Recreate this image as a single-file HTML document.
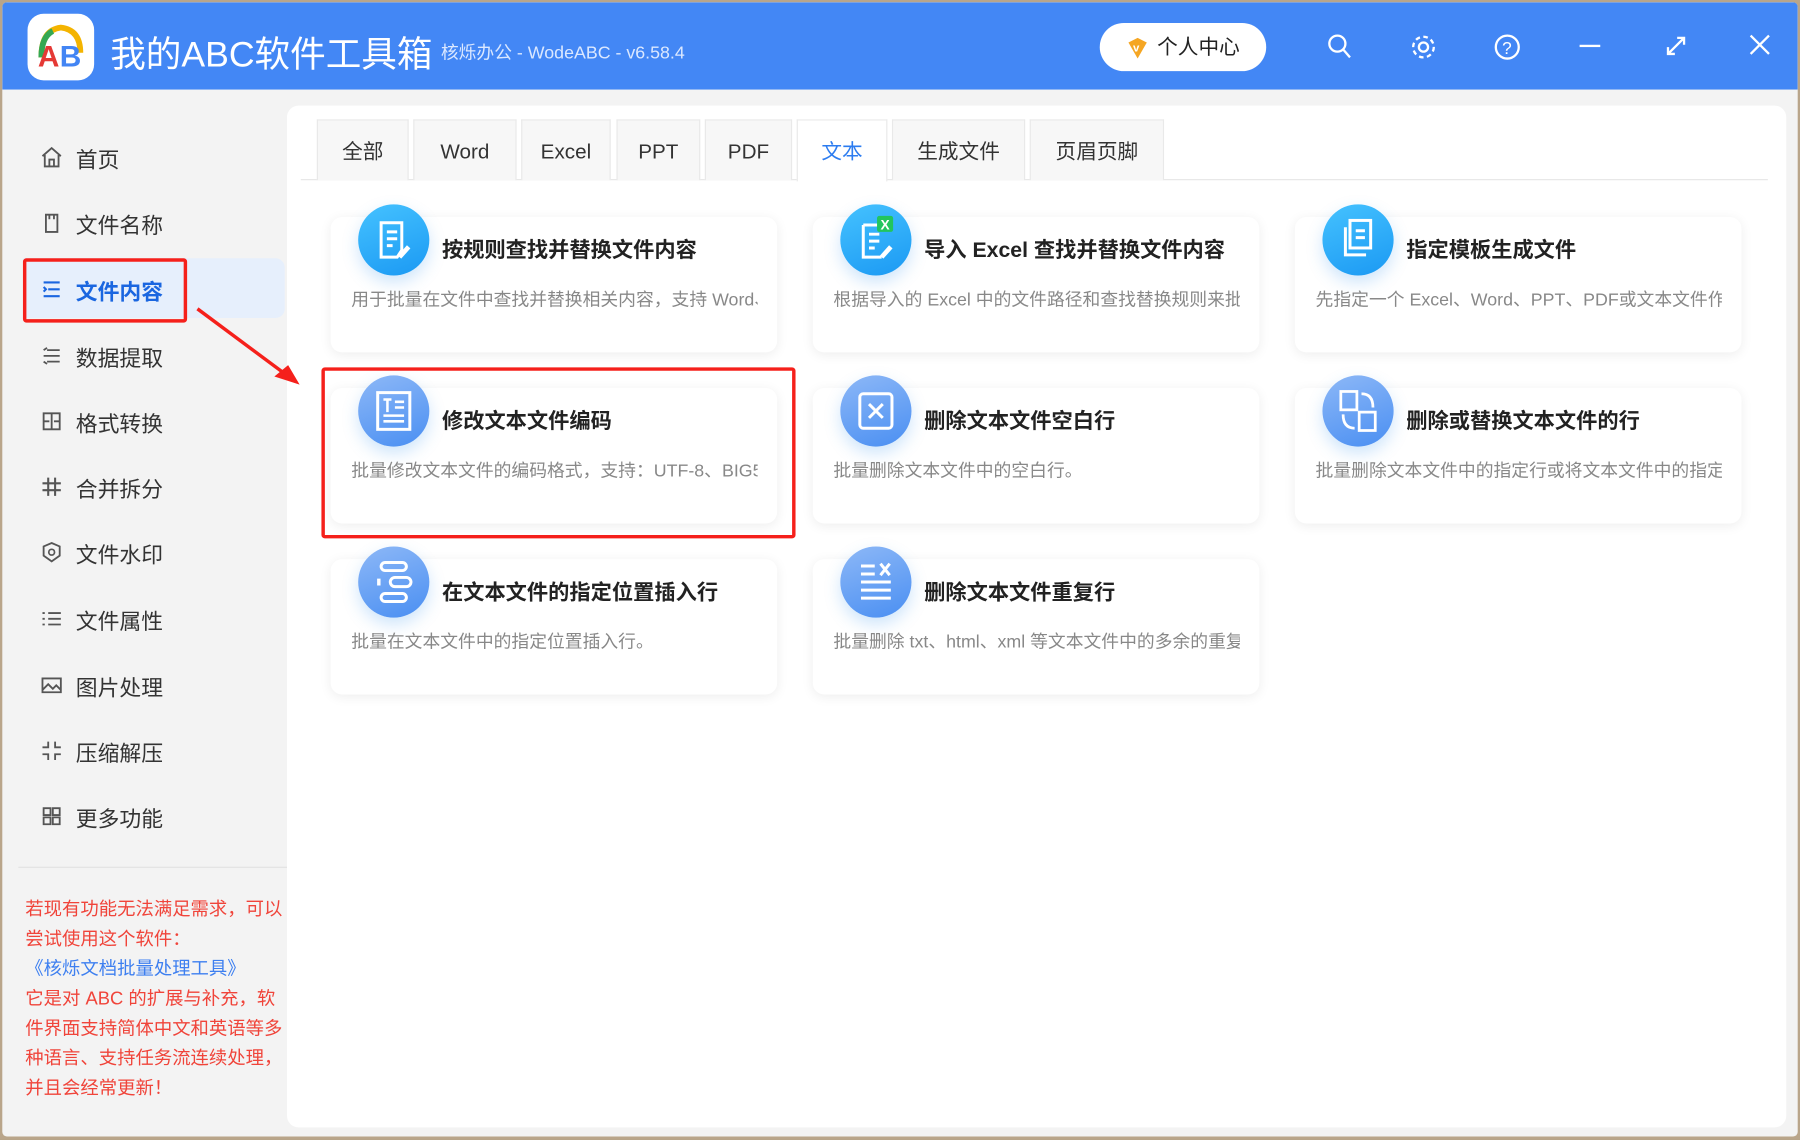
<!DOCTYPE html>
<html><head><meta charset="utf-8"><style>
*{margin:0;padding:0;box-sizing:border-box}
html,body{width:1800px;height:1140px;overflow:hidden;background:#8a7a60}
#s{position:absolute;left:0;top:0;width:1568px;height:993px;transform:scale(1.14796,1.148);transform-origin:0 0;font-family:"Liberation Sans","Noto Sans CJK SC",sans-serif;background:#b9a58a}
.win{position:absolute;left:2px;top:2px;width:1564px;height:988px;background:#f3f3f3;overflow:hidden;border-radius:4px}
.tb{position:absolute;left:0;top:0;width:100%;height:76px;background:#4387f5}
.logo{position:absolute;left:22px;top:10px;width:58px;height:58px;background:#fff;border-radius:14px}
.title{position:absolute;left:94px;top:20px;color:#fff;font-size:31px;white-space:nowrap}
.sub{position:absolute;left:382px;top:32px;color:#dbe8ff;font-size:15.5px;white-space:nowrap}
.vip{position:absolute;left:956px;top:18px;width:145px;height:42px;background:#fff;border-radius:21px;font-size:18px;color:#222;line-height:42px;padding-left:50px}
.ic{position:absolute;top:26px}
.nav{position:absolute;left:64px;font-size:19px;color:#333;white-space:nowrap}
.ni{position:absolute;left:33px;width:20px;height:20px}
.main{position:absolute;left:248px;top:90px;width:1306px;height:890px;background:#fff;border-radius:10px}
.tab{position:absolute;top:102px;height:53px;background:#f7f7f7;border:1px solid #e9e9e9;border-bottom:none;font-size:18px;color:#333;text-align:center;line-height:54px}
.card{position:absolute;width:389px;height:118px;background:#fff;border-radius:10px;box-shadow:0 2px 10px rgba(0,0,0,.07)}
.cic{position:absolute;width:62px;height:62px;border-radius:50%;box-shadow:0 6px 14px rgba(60,150,240,.25)}
.a{background:linear-gradient(160deg,#45c2ff,#1b99f3)}
.b{background:linear-gradient(160deg,#8db8f7,#4a8ff2)}
.ct{position:absolute;font-size:18.5px;font-weight:bold;color:#222;white-space:nowrap}
.cd{position:absolute;font-size:15.5px;color:#888;white-space:nowrap;overflow:hidden;width:354px}
.red{color:#f0443a;font-size:16px;position:absolute;left:20px;line-height:26px;width:228px}
</style></head><body><div id="s">
<div class="win">
<div class="tb">
<div class="logo"><svg width="58" height="58" viewBox="0 0 58 58"><path d="M12 38 Q12 14 29 12 Q46 14 46 34" fill="none" stroke="#f4b400" stroke-width="5"/><path d="M12 38 Q12 20 22 15" fill="none" stroke="#34a853" stroke-width="5"/><text x="9" y="46" font-size="26" font-weight="bold" fill="#e53935" font-family="Liberation Sans">A</text><text x="28" y="46" font-size="26" font-weight="bold" fill="#4285f4" font-family="Liberation Sans">B</text></svg></div>
<div class="title">我的ABC软件工具箱</div>
<div class="sub">核烁办公 - WodeABC - v6.58.4</div>
<div class="vip"><svg style="position:absolute;left:22px;top:11px" width="22" height="22" viewBox="0 0 22 22"><path d="M3 6 L11 2 L19 6 L11 20 Z" fill="#f5a623"/><text x="7" y="14" font-size="10" fill="#fff" font-weight="bold">v</text></svg>个人中心</div>
<svg class="ic" style="left:1153px" width="24" height="26" viewBox="0 0 24 26"><circle cx="10" cy="10" r="7" fill="none" stroke="#fff" stroke-width="2"/><path d="M15 15 L21 22" stroke="#fff" stroke-width="2"/></svg>
<svg class="ic" style="left:1225px" width="26" height="26" viewBox="0 0 26 26"><circle cx="13" cy="13" r="4" fill="none" stroke="#fff" stroke-width="2"/><circle cx="13" cy="13" r="9" fill="none" stroke="#fff" stroke-width="2" stroke-dasharray="4 3"/></svg>
<svg class="ic" style="left:1298px" width="26" height="26" viewBox="0 0 26 26"><circle cx="13" cy="13" r="10" fill="none" stroke="#fff" stroke-width="2"/><text x="8.5" y="19" font-size="15" fill="#fff" font-family="Liberation Sans">?</text></svg>
<div style="position:absolute;left:1374px;top:37px;width:18px;height:2px;background:#fff"></div>
<svg class="ic" style="left:1446px" width="24" height="24" viewBox="0 0 24 24"><path d="M5 19 L19 5 M13 5 L19 5 L19 11 M5 13 L5 19 L11 19" fill="none" stroke="#fff" stroke-width="2"/></svg>
<svg class="ic" style="left:1520px" width="22" height="22" viewBox="0 0 22 22"><path d="M3 3 L19 19 M19 3 L3 19" stroke="#fff" stroke-width="2"/></svg>
</div>

<div style="position:absolute;left:18px;top:223px;width:228px;height:52px;background:#e6effc;border-radius:0 8px 8px 0"></div>
<div style="position:absolute;left:18px;top:223px;width:143px;height:56px;border:3px solid #f5201b;border-radius:3px"></div>
<div class="nav" style="top:123px">首页</div>
<div class="nav" style="top:180px">文件名称</div>
<div class="nav" style="top:238px;color:#1a66e0;font-weight:bold">文件内容</div>
<div class="nav" style="top:296px">数据提取</div>
<div class="nav" style="top:353px">格式转换</div>
<div class="nav" style="top:410px">合并拆分</div>
<div class="nav" style="top:467px">文件水印</div>
<div class="nav" style="top:525px">文件属性</div>
<div class="nav" style="top:583px">图片处理</div>
<div class="nav" style="top:640px">压缩解压</div>
<div class="nav" style="top:697px">更多功能</div>
<svg class="ni" style="top:125px" viewBox="0 0 20 20"><path d="M2 9 L10 2 L18 9 M4 8 V18 H16 V8 M8 18 V12 H12 V18" fill="none" stroke="#555" stroke-width="1.6"/></svg>
<svg class="ni" style="top:182px" viewBox="0 0 20 20"><path d="M5 3 H15 V18 H5 Z M8 3 V7 M12 3 V7" fill="none" stroke="#555" stroke-width="1.6"/></svg>
<svg class="ni" style="top:240px" viewBox="0 0 20 20"><path d="M3 4 H17 M7 10 H17 M3 16 H17 M3 8 L5 10 L3 12" fill="none" stroke="#1a66e0" stroke-width="1.8"/></svg>
<svg class="ni" style="top:298px" viewBox="0 0 20 20"><path d="M6 5 H17 M3 10 H17 M6 15 H17 M3 5 L6 3 M3 15 L6 17" fill="none" stroke="#555" stroke-width="1.6"/></svg>
<svg class="ni" style="top:355px" viewBox="0 0 20 20"><path d="M3 3 H17 V17 H3 Z M10 3 V17 M3 10 H8 M12 10 H17" fill="none" stroke="#555" stroke-width="1.6"/></svg>
<svg class="ni" style="top:412px" viewBox="0 0 20 20"><path d="M7 2 V18 M13 2 V18 M2 7 H18 M2 13 H18" fill="none" stroke="#555" stroke-width="1.8"/></svg>
<svg class="ni" style="top:469px" viewBox="0 0 20 20"><path d="M10 2 L17 5 V13 L10 18 L3 13 V5 Z" fill="none" stroke="#555" stroke-width="1.6"/><circle cx="10" cy="10" r="2.5" fill="none" stroke="#555" stroke-width="1.5"/></svg>
<svg class="ni" style="top:527px" viewBox="0 0 20 20"><path d="M2 5 H4 M7 5 H18 M2 10 H4 M7 10 H18 M2 15 H4 M7 15 H18" stroke="#555" stroke-width="1.6"/></svg>
<svg class="ni" style="top:585px" viewBox="0 0 20 20"><path d="M2 4 H18 V16 H2 Z M2 14 L7 9 L11 13 L14 10 L18 14" fill="none" stroke="#555" stroke-width="1.6"/></svg>
<svg class="ni" style="top:642px" viewBox="0 0 20 20"><path d="M2 7 H7 V2 M13 2 V7 H18 M2 13 H7 V18 M13 18 V13 H18" fill="none" stroke="#555" stroke-width="1.6"/></svg>
<svg class="ni" style="top:699px" viewBox="0 0 20 20"><path d="M3 3 H9 V9 H3 Z M11 3 H17 V9 H11 Z M3 11 H9 V17 H3 Z M11 11 H17 V17 H11 Z" fill="none" stroke="#555" stroke-width="1.6"/></svg>
<div style="position:absolute;left:14px;top:753px;width:234px;height:1px;background:#e2e2e2"></div>
<div class="red" style="top:778px">若现有功能无法满足需求，可以尝试使用这个软件：<br><span style="color:#3d7ff0">《核烁文档批量处理工具》</span><br>它是对 ABC 的扩展与补充，软件界面支持简体中文和英语等多种语言、支持任务流连续处理，并且会经常更新！</div>

<div class="main"></div>
<div style="position:absolute;left:260px;top:154px;width:1278px;height:1px;background:#e6e6e6"></div>
<div class="tab" style="left:274px;width:80px">全部</div>
<div class="tab" style="left:358px;width:90px">Word</div>
<div class="tab" style="left:452px;width:78px">Excel</div>
<div class="tab" style="left:535px;width:73px">PPT</div>
<div class="tab" style="left:612px;width:76px">PDF</div>
<div class="tab" style="left:692px;width:79px;background:#fff;color:#2c7cf0;height:54px">文本</div>
<div class="tab" style="left:775px;width:116px">生成文件</div>
<div class="tab" style="left:895px;width:117px">页眉页脚</div>
</div>

<!-- cards (absolute in #s coords) -->
<div class="card" style="left:288px;top:189px"></div>
<div class="card" style="left:708px;top:189px"></div>
<div class="card" style="left:1128px;top:189px"></div>
<div class="card" style="left:288px;top:338px"></div>
<div class="card" style="left:708px;top:338px"></div>
<div class="card" style="left:1128px;top:338px"></div>
<div class="card" style="left:288px;top:487px"></div>
<div class="card" style="left:708px;top:487px"></div>

<div class="cic a" style="left:312px;top:178px"><svg width="62" height="62" viewBox="0 0 62 62"><path d="M20 16 H38 V40 L34 46 H20 Z M25 24 H34 M25 30 H34 M25 36 H30" fill="none" stroke="#fff" stroke-width="2.6"/><path d="M36 46 L44 37" stroke="#fff" stroke-width="4"/></svg></div>
<div class="cic a" style="left:732px;top:178px"><svg width="62" height="62" viewBox="0 0 62 62"><path d="M20 18 H34 M20 18 V46 H36 M25 26 H34 M25 32 H34 M25 38 H30" fill="none" stroke="#fff" stroke-width="2.6"/><rect x="32" y="10" width="14" height="14" rx="2" fill="#22c55e"/><text x="35" y="22" font-size="12" fill="#fff" font-weight="bold" font-family="Liberation Sans">X</text><path d="M36 46 L44 37" stroke="#fff" stroke-width="4"/></svg></div>
<div class="cic a" style="left:1152px;top:178px"><svg width="62" height="62" viewBox="0 0 62 62"><rect x="24" y="14" width="18" height="24" fill="none" stroke="#fff" stroke-width="2.6"/><path d="M20 20 V44 H38" fill="none" stroke="#fff" stroke-width="2.6"/><path d="M29 23 H37 M29 29 H37" stroke="#fff" stroke-width="2.6"/></svg></div>
<div class="cic b" style="left:312px;top:327px"><svg width="62" height="62" viewBox="0 0 62 62"><rect x="17" y="15" width="28" height="32" fill="none" stroke="#fff" stroke-width="2.6"/><path d="M22 21 H29 M25.5 21 V32 M32 23 H40 M32 28 H40 M22 35 H40 M22 40 H40" stroke="#fff" stroke-width="2.2"/></svg></div>
<div class="cic b" style="left:732px;top:327px"><svg width="62" height="62" viewBox="0 0 62 62"><rect x="17" y="16" width="28" height="30" rx="3" fill="none" stroke="#fff" stroke-width="2.6"/><path d="M25 25 L37 37 M37 25 L25 37" stroke="#fff" stroke-width="2.6"/></svg></div>
<div class="cic b" style="left:1152px;top:327px"><svg width="62" height="62" viewBox="0 0 62 62"><rect x="16" y="14" width="14" height="16" fill="none" stroke="#fff" stroke-width="2.4"/><rect x="32" y="32" width="14" height="16" fill="none" stroke="#fff" stroke-width="2.4"/><path d="M34 16 Q44 16 44 28 M18 34 Q18 46 28 46" fill="none" stroke="#fff" stroke-width="2.4"/></svg></div>
<div class="cic b" style="left:312px;top:476px"><svg width="62" height="62" viewBox="0 0 62 62"><rect x="20" y="14" width="22" height="7" rx="3.5" fill="none" stroke="#fff" stroke-width="2.6"/><rect x="28" y="27" width="18" height="8" rx="4" fill="none" stroke="#fff" stroke-width="2.6"/><rect x="20" y="41" width="22" height="7" rx="3.5" fill="none" stroke="#fff" stroke-width="2.6"/><path d="M18 28 V34" stroke="#fff" stroke-width="3"/></svg></div>
<div class="cic b" style="left:732px;top:476px"><svg width="62" height="62" viewBox="0 0 62 62"><path d="M18 17 H30 M18 24 H30 M18 31 H44 M18 38 H44 M18 45 H44 M35 15 L43 25 M43 15 L35 25" stroke="#fff" stroke-width="2.6"/></svg></div>

<div class="ct" style="left:385px;top:204px">按规则查找并替换文件内容</div>
<div class="ct" style="left:805px;top:204px">导入 Excel 查找并替换文件内容</div>
<div class="ct" style="left:1225px;top:204px">指定模板生成文件</div>
<div class="ct" style="left:385px;top:353px">修改文本文件编码</div>
<div class="ct" style="left:805px;top:353px">删除文本文件空白行</div>
<div class="ct" style="left:1225px;top:353px">删除或替换文本文件的行</div>
<div class="ct" style="left:385px;top:502px">在文本文件的指定位置插入行</div>
<div class="ct" style="left:805px;top:502px">删除文本文件重复行</div>

<div class="cd" style="left:306px;top:249px">用于批量在文件中查找并替换相关内容，支持 Word、Excel</div>
<div class="cd" style="left:726px;top:249px">根据导入的 Excel 中的文件路径和查找替换规则来批量处理</div>
<div class="cd" style="left:1146px;top:249px">先指定一个 Excel、Word、PPT、PDF或文本文件作为模板</div>
<div class="cd" style="left:306px;top:398px">批量修改文本文件的编码格式，支持：UTF-8、BIG5</div>
<div class="cd" style="left:726px;top:398px">批量删除文本文件中的空白行。</div>
<div class="cd" style="left:1146px;top:398px">批量删除文本文件中的指定行或将文本文件中的指定行替换</div>
<div class="cd" style="left:306px;top:547px">批量在文本文件中的指定位置插入行。</div>
<div class="cd" style="left:726px;top:547px">批量删除 txt、html、xml 等文本文件中的多余的重复行</div>

<div style="position:absolute;left:280px;top:320px;width:413px;height:149px;border:3px solid #f5201b;border-radius:3px"></div>
<svg style="position:absolute;left:165px;top:262px" width="100" height="80" viewBox="0 0 100 80"><path d="M7 7 L85 65" stroke="#f5201b" stroke-width="3"/><path d="M96 73 L74 66 L86 56 Z" fill="#f5201b"/></svg>
</div></body></html>
